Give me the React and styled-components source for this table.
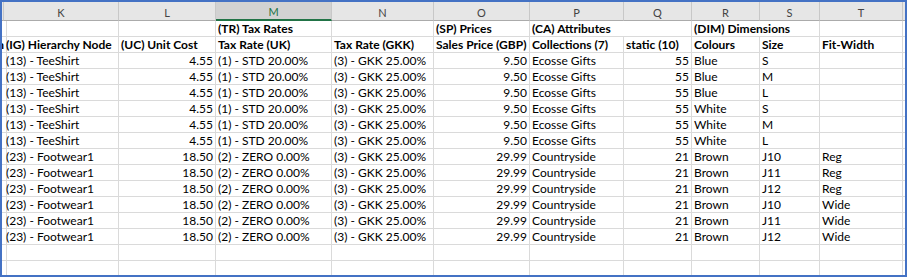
import React from 'react';
import styled, { createGlobalStyle } from 'styled-components';

const GlobalStyle = createGlobalStyle`
  html, body {
    margin: 0;
    padding: 0;
    background: #fff;
  }
`;

const Frame = styled.div`
  box-sizing: border-box;
  width: 907px;
  height: 277px;
  border: 2px solid #4472c4;
  overflow: hidden;
  background: #fff;
  font-family: Lato, "Liberation Sans", Arial, sans-serif;
`;

const Sheet = styled.div`
  display: grid;
  grid-template-columns: 2px 115px 97px 116px 102px 96px 94px 68px 68px 60px 83px 1fr;
  grid-auto-rows: 16px;
  grid-template-rows: 19px;
`;

const ColHead = styled.div`
  box-sizing: border-box;
  display: flex;
  align-items: center;
  justify-content: center;
  padding-top: 2px;
  background: ${p => (p.$selected ? '#d2d2d2' : '#e6e6e6')};
  color: ${p => (p.$selected ? '#217346' : '#444')};
  font-size: 11px;
  border-right: 1px solid #c8c8c8;
  border-bottom: ${p => (p.$selected ? '2px solid #217346' : '1px solid #ababab')};
  overflow: hidden;
`;

const Cell = styled.div`
  box-sizing: border-box;
  display: flex;
  grid-column: ${p => (p.$span ? `span ${p.$span}` : 'auto')};
  justify-content: ${p => (p.$num || p.$tail ? 'flex-end' : 'flex-start')};
  padding: 0 2px;
  border-right: 1px solid #dadada;
  border-bottom: 1px solid #dadada;
  font-size: 12px;
  line-height: 15px;
  font-weight: ${p => (p.$bold ? 700 : 400)};
  color: #000;
  white-space: nowrap;
  overflow: hidden;
`;

const letters = ['', 'K', 'L', 'M', 'N', 'O', 'P', 'Q', 'R', 'S', 'T', ''];

// row 1 holds the field groups, some of which run across two columns
const groups = [
  { text: '' },
  { text: '' },
  { text: '' },
  { text: '(TR) Tax Rates' },
  { text: '' },
  { text: '(SP) Prices' },
  { text: '(CA) Attributes', span: 2 },
  { text: '(DIM) Dimensions', span: 2 },
  { text: '' },
  { text: '' },
];

const fields = [
  'Description',
  '(IG) Hierarchy Node',
  '(UC) Unit Cost',
  'Tax Rate (UK)',
  'Tax Rate (GKK)',
  'Sales Price (GBP)',
  'Collections (7)',
  'static (10)',
  'Colours',
  'Size',
  'Fit-Width',
  'Fit-Length',
];

// which columns hold numbers (right aligned)
const numeric = [false, false, true, false, false, true, false, true, false, false, false, false];

const tee = ['(13) - TeeShirt', '4.55', '(1) - STD 20.00%', '(3) - GKK 25.00%', '9.50', 'Ecosse Gifts', '55'];
const shoe = ['(23) - Footwear1', '18.50', '(2) - ZERO 0.00%', '(3) - GKK 25.00%', '29.99', 'Countryside', '21'];

const products = [
  [...tee, 'Blue', 'S', ''],
  [...tee, 'Blue', 'M', ''],
  [...tee, 'Blue', 'L', ''],
  [...tee, 'White', 'S', ''],
  [...tee, 'White', 'M', ''],
  [...tee, 'White', 'L', ''],
  [...shoe, 'Brown', 'J10', 'Reg'],
  [...shoe, 'Brown', 'J11', 'Reg'],
  [...shoe, 'Brown', 'J12', 'Reg'],
  [...shoe, 'Brown', 'J10', 'Wide'],
  [...shoe, 'Brown', 'J11', 'Wide'],
  [...shoe, 'Brown', 'J12', 'Wide'],
];

const blankRow = Array(12).fill('');

export default function App() {
  const rows = [...products.map(r => ['', ...r, '']), blankRow, blankRow];

  return (
    <>
      <GlobalStyle />
      <Frame>
        <Sheet>
          {letters.map((l, i) => (
            <ColHead key={`h${i}`} $selected={l === 'M'}>{l}</ColHead>
          ))}

          {groups.map((g, i) => (
            <Cell key={`g${i}`} $bold $span={g.span}>{g.text}</Cell>
          ))}

          {fields.map((f, i) => (
            <Cell key={`f${i}`} $bold $tail={i === 0}>{f}</Cell>
          ))}

          {rows.map((row, r) =>
            row.map((v, c) => (
              <Cell key={`r${r}c${c}`} $num={numeric[c]}>{v}</Cell>
            ))
          )}
        </Sheet>
      </Frame>
    </>
  );
}
